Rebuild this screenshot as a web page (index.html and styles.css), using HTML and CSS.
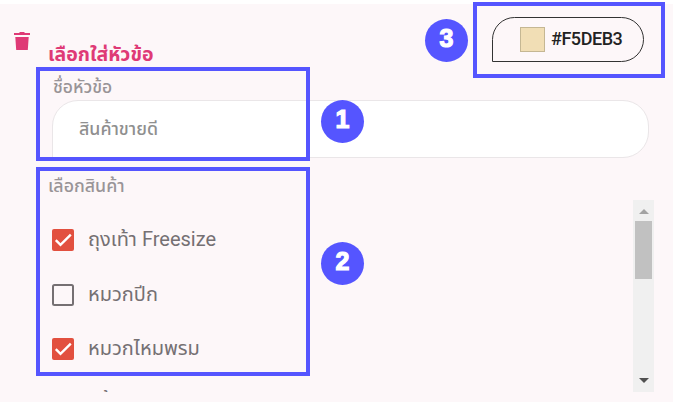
FILE: index.html
```html
<!DOCTYPE html>
<html lang="th">

<head>
    <meta charset="UTF-8">
    <meta name="viewport" content="width=device-width, initial-scale=1.0">
    <title>เลือกใส่หัวข้อ</title>
    <link rel="stylesheet" href="styles.css">
</head>

<body>
    <div class="panel">
        <!-- Header -->
        <div class="header">
            <svg class="trash" viewBox="0 0 16 18">
                <path d="M0 1h5l1-1h4l1 1h5v2H0zM1.3 5h13.4l-.9 13H2.2z" fill="#df3a76" />
            </svg>
            <h1 class="title"><span>เลือกใส่หัวข้อ</span></h1>
            <button class="color-button">
                <span class="swatch"></span>
                <span class="color-code">#F5DEB3</span>
            </button>
        </div>

        <!-- Topic name -->
        <div class="field">
            <label class="field-label">ชื่อหัวข้อ</label>
            <div class="text-box"><span>สินค้าขายดี</span></div>
        </div>

        <!-- Product list -->
        <div class="products">
            <div class="list-label">เลือกสินค้า</div>
            <div class="list">
                <div class="items">
                    <div class="item">
                        <svg class="check" viewBox="0 0 22 22">
                            <rect width="22" height="22" rx="2" fill="#e2503f" />
                            <path d="M3.8 11.2l4.7 4.7L18.8 5.7" fill="none" stroke="#fff" stroke-width="2.4" />
                        </svg>
                        <span class="name">ถุงเท้า Freesize</span>
                    </div>
                    <div class="item">
                        <svg class="check" viewBox="0 0 22 22">
                            <rect x="1" y="1" width="20" height="20" rx="1.5" fill="none" stroke="#757073" stroke-width="2" />
                        </svg>
                        <span class="name">หมวกปีก</span>
                    </div>
                    <div class="item">
                        <svg class="check" viewBox="0 0 22 22">
                            <rect width="22" height="22" rx="2" fill="#e2503f" />
                            <path d="M3.8 11.2l4.7 4.7L18.8 5.7" fill="none" stroke="#fff" stroke-width="2.4" />
                        </svg>
                        <span class="name">หมวกไหมพรม</span>
                    </div>
                    <div class="item">
                        <svg class="check" viewBox="0 0 22 22">
                            <rect x="1" y="1" width="20" height="20" rx="1.5" fill="none" stroke="#757073" stroke-width="2" />
                        </svg>
                        <span class="name name-last">แก้ว</span>
                    </div>
                </div>
                <div class="scrollbar">
                    <svg class="arrow" viewBox="0 0 21 21">
                        <path d="M6 14l5-5 5 5z" fill="#a3a3a3" />
                    </svg>
                    <div class="thumb"></div>
                    <svg class="arrow arrow-down" viewBox="0 0 21 21">
                        <path d="M6 7l5 5 5-5z" fill="#505050" />
                    </svg>
                </div>
            </div>
        </div>
    </div>

    <!-- Step markers -->
    <div class="frame frame-1"></div>
    <div class="frame frame-2"></div>
    <div class="frame frame-3"></div>
    <div class="badge badge-1">1</div>
    <div class="badge badge-2">2</div>
    <div class="badge badge-3">3</div>
</body>

</html>
```
FILE: styles.css
```css
* {
    box-sizing: border-box;
}

body {
    margin: 0;
    padding-top: 4px;
    background: #fff;
    font-family: Roboto, "Noto Sans Thai", "Noto Sans", sans-serif;
    position: relative;
    overflow: hidden;
}

.panel {
    width: 673px;
    height: 398px;
    background: #fdf7f9;
    overflow: hidden;
}

.header {
    display: flex;
    align-items: flex-start;
    height: 70px;
    padding: 13px 29px 0 14px;
}

.trash {
    width: 16px;
    height: 18px;
    margin-top: 15px;
}

.title {
    flex: 1;
    margin: 23px 0 0 18px;
    font-size: 19.5px;
    line-height: 30px;
    font-weight: bold;
    color: #df3a76;
    white-space: nowrap;
}

.color-button {
    display: flex;
    align-items: center;
    width: 152px;
    height: 45px;
    padding: 0 0 0 27px;
    border: 1px solid #333;
    border-radius: 23px 23px 23px 0;
    background: transparent;
    color: #222;
    font-family: inherit;
}

.swatch {
    width: 25px;
    height: 25px;
    margin-right: 6px;
    border: 1px solid #c5b793;
    background: #f1deb5;
}

.color-code {
    margin-bottom: 2px;
    font-size: 18px;
    font-weight: 500;
    letter-spacing: -0.45px;
}

.field {
    padding-left: 53px;
}

.field-label {
    display: block;
    height: 26px;
    font-size: 17.5px;
    font-weight: 500;
    line-height: 26px;
    color: #999497;
}

.text-box {
    display: flex;
    align-items: center;
    width: 597px;
    height: 58px;
    margin-left: -1px;
    padding-left: 26px;
    border: 1px solid #eae6e8;
    border-radius: 26px 26px 26px 0;
    background: #fff;
    font-size: 17.8px;
    font-weight: 500;
    color: #8f8f8f;
}

.list-label {
    height: 42px;
    padding: 15px 0 0 48px;
    font-size: 17.8px;
    font-weight: 500;
    line-height: 26px;
    color: #999497;
}

.list {
    display: flex;
    justify-content: space-between;
    width: 654px;
    height: 192px;
    overflow: hidden;
}

.items {
    padding: 13px 0 0 52px;
}

.item {
    display: flex;
    align-items: center;
    height: 54.5px;
}

.check {
    width: 22px;
    height: 22px;
    margin-right: 14px;
}

.name {
    font-size: 20px;
    color: #757073;
    white-space: nowrap;
}

.name-last {
    padding-bottom: 6px;
}

.scrollbar {
    display: flex;
    flex-direction: column;
    width: 21px;
    background: #f0f0f0;
}

.arrow {
    width: 21px;
    height: 21px;
}

.thumb {
    width: 17px;
    height: 58px;
    margin-left: 2px;
    background: #c1c1c1;
}

.arrow-down {
    margin-top: auto;
}

.frame {
    position: absolute;
    border: 4px solid #5555ff;
}

.frame-1 {
    left: 36px;
    top: 67px;
    width: 274px;
    height: 94px;
}

.frame-2 {
    left: 36px;
    top: 167px;
    width: 274px;
    height: 209px;
}

.frame-3 {
    left: 473px;
    top: 2px;
    width: 192px;
    height: 76px;
}

.badge {
    position: absolute;
    width: 43px;
    height: 43px;
    border-radius: 50%;
    background: #5555ff;
    color: #fff;
    font-family: "Liberation Sans", Arial, sans-serif;
    font-size: 25px;
    font-weight: bold;
    line-height: 38px;
    text-align: center;
    -webkit-text-stroke: 1.2px #fff;
}

.badge-1 {
    left: 321px;
    top: 100px;
}

.badge-2 {
    left: 321px;
    top: 242px;
}

.badge-3 {
    left: 425px;
    top: 19px;
}
```
